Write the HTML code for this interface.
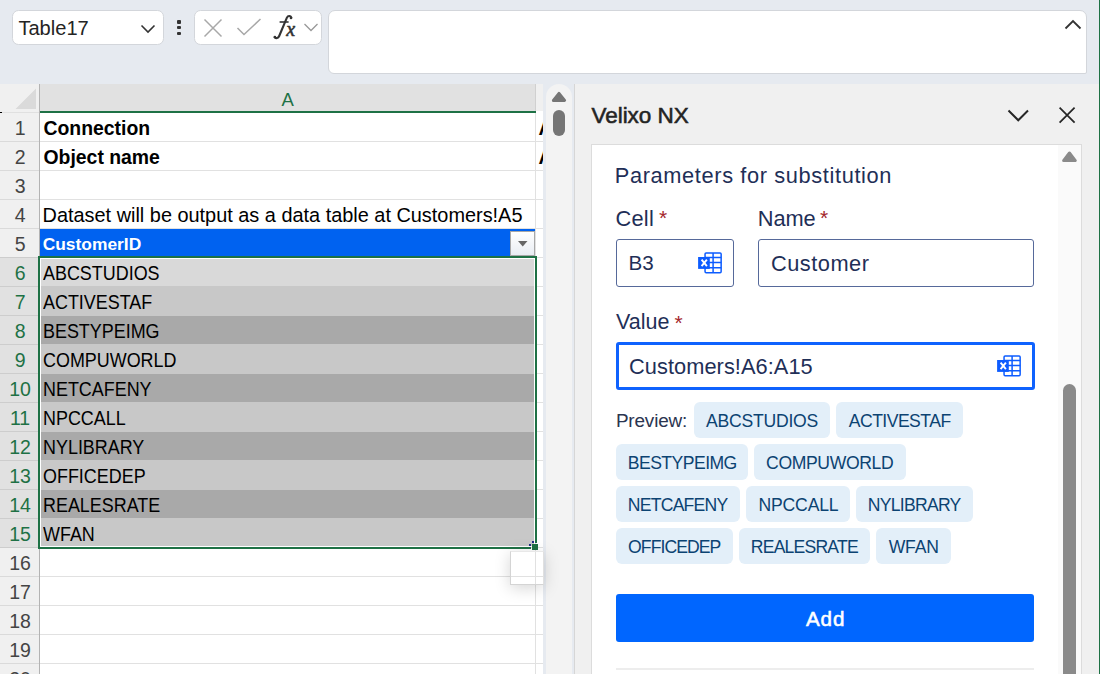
<!DOCTYPE html>
<html><head><meta charset="utf-8">
<style>
*{box-sizing:border-box;margin:0;padding:0}
html,body{width:1100px;height:674px;overflow:hidden;background:#e6eaf0;font-family:"Liberation Sans",sans-serif;position:relative}
.a{position:absolute}
.t{position:absolute;white-space:nowrap;line-height:1}
svg{position:absolute;overflow:visible}
</style></head><body>
<div class="a" style="left:12px;top:10px;width:152px;height:35px;background:#fff;border:1px solid #d3d6db;border-radius:6.5px;"></div>
<div class="t" style="left:18.40px;top:18.19px;font-size:20.1px;color:#242424;">Table17</div>
<svg style="left:138px;top:22px" width="20" height="14"><path d="M3.5 3.5 L10 10 L16.5 3.5" fill="none" stroke="#333" stroke-width="1.6"/></svg>
<div class="a" style="left:177.2px;top:20.1px;width:3.7px;height:3.6px;background:#333;border-radius:1px;"></div>
<div class="a" style="left:177.2px;top:25.9px;width:3.7px;height:3.6px;background:#333;border-radius:1px;"></div>
<div class="a" style="left:177.2px;top:31.6px;width:3.7px;height:3.6px;background:#333;border-radius:1px;"></div>
<div class="a" style="left:194px;top:10px;width:128px;height:35px;background:#fff;border:1px solid #d3d6db;border-radius:6.5px;"></div>
<svg style="left:200px;top:15px" width="26" height="26"><path d="M4.5 4.5 L21.5 21.5 M21.5 4.5 L4.5 21.5" fill="none" stroke="#a8a8a8" stroke-width="1.5"/></svg>
<svg style="left:234px;top:15px" width="30" height="26"><path d="M3.5 13 L10 19.5 L26.5 4" fill="none" stroke="#a8a8a8" stroke-width="1.5"/></svg>
<svg style="left:0;top:0" width="340" height="50"><path d="M291.3 17.6 C290.6 15.6 288 15.4 286.9 17.6 L279.2 36 C278.2 38.4 276 38.6 274.6 37.2" fill="none" stroke="#333" stroke-width="2.1" stroke-linecap="round"/><circle cx="291" cy="17.9" r="1.3" fill="#333"/><circle cx="274.9" cy="37" r="1.3" fill="#333"/><path d="M279.6 22 H288.6" stroke="#333" stroke-width="1.6"/></svg>
<div class="t" style="left:286.20px;top:18.87px;font-size:20px;color:#333;font-style:italic;font-family:'Liberation Serif',serif;-webkit-text-stroke:0.6px #333;">x</div>
<svg style="left:302px;top:20px" width="18" height="14"><path d="M2.5 4 L9 10.5 L15.5 4" fill="none" stroke="#999" stroke-width="1.3"/></svg>
<div class="a" style="left:328px;top:10px;width:759px;height:64px;background:#fff;border:1px solid #d3d6db;border-radius:7px 7px 2px 6px;"></div>
<svg style="left:1062px;top:17px" width="22" height="16"><path d="M3.5 11.5 L11 4 L18.5 11.5" fill="none" stroke="#333" stroke-width="1.8"/></svg>
<div class="a" style="left:0px;top:84px;width:543px;height:590px;background:#fff;"></div>
<div class="a" style="left:0px;top:84px;width:39px;height:28px;background:#f0f0f0;"></div>
<svg style="left:0;top:84px" width="39" height="28"><path d="M36 4.5 L36 25 L15.5 25 Z" fill="#dadada"/></svg>
<div class="a" style="left:40px;top:84px;width:495px;height:27px;background:#e1e1e1;"></div>
<div class="a" style="left:535px;top:84px;width:1px;height:27px;background:#d0d0d0;"></div>
<div class="a" style="left:536px;top:84px;width:7px;height:27px;background:#f0f0f0;"></div>
<div class="a" style="left:0px;top:111px;width:39px;height:1px;background:#f0f0f0;"></div>
<div class="a" style="left:0px;top:112px;width:39px;height:1px;background:#e0e0e0;"></div>
<div class="a" style="left:0px;top:112px;width:1.5px;height:1px;background:#000;"></div>
<div class="a" style="left:40px;top:111px;width:496px;height:2px;background:#1e7145;"></div>
<div class="t" style="left:281.40px;top:91.14px;font-size:18.5px;color:#1e7145;">A</div>
<div class="a" style="left:0px;top:113px;width:39px;height:28px;background:#f0f0f0;"></div>
<div class="a" style="left:0px;top:141px;width:39px;height:1px;background:#dadada;"></div>
<div class="a" style="left:40px;top:141px;width:495px;height:1px;background:#e1e1e1;"></div>
<div class="a" style="left:536px;top:141px;width:7px;height:1px;background:#e1e1e1;"></div>
<div class="t" style="left:0.6px;width:39px;text-align:center;top:119.49px;font-size:19.5px;color:#444">1</div>
<div class="a" style="left:0px;top:142px;width:39px;height:28px;background:#f0f0f0;"></div>
<div class="a" style="left:0px;top:170px;width:39px;height:1px;background:#dadada;"></div>
<div class="a" style="left:40px;top:170px;width:495px;height:1px;background:#e1e1e1;"></div>
<div class="a" style="left:536px;top:170px;width:7px;height:1px;background:#e1e1e1;"></div>
<div class="t" style="left:0.6px;width:39px;text-align:center;top:148.49px;font-size:19.5px;color:#444">2</div>
<div class="a" style="left:0px;top:171px;width:39px;height:28px;background:#f0f0f0;"></div>
<div class="a" style="left:0px;top:199px;width:39px;height:1px;background:#dadada;"></div>
<div class="a" style="left:40px;top:199px;width:495px;height:1px;background:#e1e1e1;"></div>
<div class="a" style="left:536px;top:199px;width:7px;height:1px;background:#e1e1e1;"></div>
<div class="t" style="left:0.6px;width:39px;text-align:center;top:177.49px;font-size:19.5px;color:#444">3</div>
<div class="a" style="left:0px;top:200px;width:39px;height:28px;background:#f0f0f0;"></div>
<div class="a" style="left:0px;top:228px;width:39px;height:1px;background:#dadada;"></div>
<div class="a" style="left:40px;top:228px;width:495px;height:1px;background:#e1e1e1;"></div>
<div class="a" style="left:536px;top:228px;width:7px;height:1px;background:#e1e1e1;"></div>
<div class="t" style="left:0.6px;width:39px;text-align:center;top:206.49px;font-size:19.5px;color:#444">4</div>
<div class="a" style="left:0px;top:229px;width:39px;height:28px;background:#f0f0f0;"></div>
<div class="a" style="left:0px;top:257px;width:39px;height:1px;background:#cdcdcd;"></div>
<div class="a" style="left:40px;top:257px;width:495px;height:1px;background:#e1e1e1;"></div>
<div class="a" style="left:536px;top:257px;width:7px;height:1px;background:#e1e1e1;"></div>
<div class="t" style="left:0.6px;width:39px;text-align:center;top:235.49px;font-size:19.5px;color:#444">5</div>
<div class="a" style="left:0px;top:258px;width:39px;height:28px;background:#e1e1e1;"></div>
<div class="a" style="left:0px;top:286px;width:39px;height:1px;background:#cdcdcd;"></div>
<div class="a" style="left:40px;top:286px;width:495px;height:1px;background:#e1e1e1;"></div>
<div class="a" style="left:536px;top:286px;width:7px;height:1px;background:#e1e1e1;"></div>
<div class="t" style="left:0.6px;width:39px;text-align:center;top:264.49px;font-size:19.5px;color:#1e7145">6</div>
<div class="a" style="left:0px;top:287px;width:39px;height:28px;background:#e1e1e1;"></div>
<div class="a" style="left:0px;top:315px;width:39px;height:1px;background:#cdcdcd;"></div>
<div class="a" style="left:40px;top:315px;width:495px;height:1px;background:#e1e1e1;"></div>
<div class="a" style="left:536px;top:315px;width:7px;height:1px;background:#e1e1e1;"></div>
<div class="t" style="left:0.6px;width:39px;text-align:center;top:293.49px;font-size:19.5px;color:#1e7145">7</div>
<div class="a" style="left:0px;top:316px;width:39px;height:28px;background:#e1e1e1;"></div>
<div class="a" style="left:0px;top:344px;width:39px;height:1px;background:#cdcdcd;"></div>
<div class="a" style="left:40px;top:344px;width:495px;height:1px;background:#e1e1e1;"></div>
<div class="a" style="left:536px;top:344px;width:7px;height:1px;background:#e1e1e1;"></div>
<div class="t" style="left:0.6px;width:39px;text-align:center;top:322.49px;font-size:19.5px;color:#1e7145">8</div>
<div class="a" style="left:0px;top:345px;width:39px;height:28px;background:#e1e1e1;"></div>
<div class="a" style="left:0px;top:373px;width:39px;height:1px;background:#cdcdcd;"></div>
<div class="a" style="left:40px;top:373px;width:495px;height:1px;background:#e1e1e1;"></div>
<div class="a" style="left:536px;top:373px;width:7px;height:1px;background:#e1e1e1;"></div>
<div class="t" style="left:0.6px;width:39px;text-align:center;top:351.49px;font-size:19.5px;color:#1e7145">9</div>
<div class="a" style="left:0px;top:374px;width:39px;height:28px;background:#e1e1e1;"></div>
<div class="a" style="left:0px;top:402px;width:39px;height:1px;background:#cdcdcd;"></div>
<div class="a" style="left:40px;top:402px;width:495px;height:1px;background:#e1e1e1;"></div>
<div class="a" style="left:536px;top:402px;width:7px;height:1px;background:#e1e1e1;"></div>
<div class="t" style="left:0.6px;width:39px;text-align:center;top:380.49px;font-size:19.5px;color:#1e7145">10</div>
<div class="a" style="left:0px;top:403px;width:39px;height:28px;background:#e1e1e1;"></div>
<div class="a" style="left:0px;top:431px;width:39px;height:1px;background:#cdcdcd;"></div>
<div class="a" style="left:40px;top:431px;width:495px;height:1px;background:#e1e1e1;"></div>
<div class="a" style="left:536px;top:431px;width:7px;height:1px;background:#e1e1e1;"></div>
<div class="t" style="left:0.6px;width:39px;text-align:center;top:409.49px;font-size:19.5px;color:#1e7145">11</div>
<div class="a" style="left:0px;top:432px;width:39px;height:28px;background:#e1e1e1;"></div>
<div class="a" style="left:0px;top:460px;width:39px;height:1px;background:#cdcdcd;"></div>
<div class="a" style="left:40px;top:460px;width:495px;height:1px;background:#e1e1e1;"></div>
<div class="a" style="left:536px;top:460px;width:7px;height:1px;background:#e1e1e1;"></div>
<div class="t" style="left:0.6px;width:39px;text-align:center;top:438.49px;font-size:19.5px;color:#1e7145">12</div>
<div class="a" style="left:0px;top:461px;width:39px;height:28px;background:#e1e1e1;"></div>
<div class="a" style="left:0px;top:489px;width:39px;height:1px;background:#cdcdcd;"></div>
<div class="a" style="left:40px;top:489px;width:495px;height:1px;background:#e1e1e1;"></div>
<div class="a" style="left:536px;top:489px;width:7px;height:1px;background:#e1e1e1;"></div>
<div class="t" style="left:0.6px;width:39px;text-align:center;top:467.49px;font-size:19.5px;color:#1e7145">13</div>
<div class="a" style="left:0px;top:490px;width:39px;height:28px;background:#e1e1e1;"></div>
<div class="a" style="left:0px;top:518px;width:39px;height:1px;background:#cdcdcd;"></div>
<div class="a" style="left:40px;top:518px;width:495px;height:1px;background:#e1e1e1;"></div>
<div class="a" style="left:536px;top:518px;width:7px;height:1px;background:#e1e1e1;"></div>
<div class="t" style="left:0.6px;width:39px;text-align:center;top:496.49px;font-size:19.5px;color:#1e7145">14</div>
<div class="a" style="left:0px;top:519px;width:39px;height:28px;background:#e1e1e1;"></div>
<div class="a" style="left:0px;top:547px;width:39px;height:1px;background:#cdcdcd;"></div>
<div class="a" style="left:40px;top:547px;width:495px;height:1px;background:#e1e1e1;"></div>
<div class="a" style="left:536px;top:547px;width:7px;height:1px;background:#e1e1e1;"></div>
<div class="t" style="left:0.6px;width:39px;text-align:center;top:525.49px;font-size:19.5px;color:#1e7145">15</div>
<div class="a" style="left:0px;top:548px;width:39px;height:28px;background:#f0f0f0;"></div>
<div class="a" style="left:0px;top:576px;width:39px;height:1px;background:#dadada;"></div>
<div class="a" style="left:40px;top:576px;width:495px;height:1px;background:#e1e1e1;"></div>
<div class="a" style="left:536px;top:576px;width:7px;height:1px;background:#e1e1e1;"></div>
<div class="t" style="left:0.6px;width:39px;text-align:center;top:554.49px;font-size:19.5px;color:#444">16</div>
<div class="a" style="left:0px;top:577px;width:39px;height:28px;background:#f0f0f0;"></div>
<div class="a" style="left:0px;top:605px;width:39px;height:1px;background:#dadada;"></div>
<div class="a" style="left:40px;top:605px;width:495px;height:1px;background:#e1e1e1;"></div>
<div class="a" style="left:536px;top:605px;width:7px;height:1px;background:#e1e1e1;"></div>
<div class="t" style="left:0.6px;width:39px;text-align:center;top:583.49px;font-size:19.5px;color:#444">17</div>
<div class="a" style="left:0px;top:606px;width:39px;height:28px;background:#f0f0f0;"></div>
<div class="a" style="left:0px;top:634px;width:39px;height:1px;background:#dadada;"></div>
<div class="a" style="left:40px;top:634px;width:495px;height:1px;background:#e1e1e1;"></div>
<div class="a" style="left:536px;top:634px;width:7px;height:1px;background:#e1e1e1;"></div>
<div class="t" style="left:0.6px;width:39px;text-align:center;top:612.49px;font-size:19.5px;color:#444">18</div>
<div class="a" style="left:0px;top:635px;width:39px;height:28px;background:#f0f0f0;"></div>
<div class="a" style="left:0px;top:663px;width:39px;height:1px;background:#dadada;"></div>
<div class="a" style="left:40px;top:663px;width:495px;height:1px;background:#e1e1e1;"></div>
<div class="a" style="left:536px;top:663px;width:7px;height:1px;background:#e1e1e1;"></div>
<div class="t" style="left:0.6px;width:39px;text-align:center;top:641.49px;font-size:19.5px;color:#444">19</div>
<div class="a" style="left:0px;top:664px;width:39px;height:28px;background:#f0f0f0;"></div>
<div class="a" style="left:0px;top:692px;width:39px;height:1px;background:#dadada;"></div>
<div class="a" style="left:40px;top:692px;width:495px;height:1px;background:#e1e1e1;"></div>
<div class="a" style="left:536px;top:692px;width:7px;height:1px;background:#e1e1e1;"></div>
<div class="t" style="left:0.6px;width:39px;text-align:center;top:670.49px;font-size:19.5px;color:#444">20</div>
<div class="a" style="left:39px;top:84px;width:1px;height:590px;background:#b3b3b3;"></div>
<div class="a" style="left:535px;top:113px;width:1px;height:561px;background:#e1e1e1;"></div>
<div class="t" style="left:43.50px;top:118.88px;font-size:19.4px;color:#000;font-weight:bold;">Connection</div>
<div class="t" style="left:43.50px;top:147.88px;font-size:19.4px;color:#000;font-weight:bold;">Object name</div>
<div class="t" style="left:42.60px;top:205.85px;font-size:19.9px;color:#000;">Dataset will be output as a data table at Customers!A5</div>
<div class="a" style="left:40px;top:229px;width:495px;height:27px;background:#0062f0;"></div>
<div class="t" style="left:42.70px;top:236.27px;font-size:17.4px;color:#fff;font-weight:bold;">CustomerID</div>
<div class="a" style="left:510px;top:231px;width:25px;height:25px;background:linear-gradient(#ffffff,#e9edf3);border:1px solid #a8a8a8;"></div>
<svg style="left:510px;top:231px" width="25" height="25"><path d="M8 10 L17.5 10 L12.75 15.5 Z" fill="#666"/></svg>
<div class="a" style="left:40px;top:258px;width:495px;height:288px;background:#c8c8c8;"></div>
<div class="a" style="left:40px;top:259px;width:495px;height:27px;background:#d9d9d9;"></div>
<div class="a" style="left:40px;top:316px;width:495px;height:28px;background:#a9a9a9;"></div>
<div class="a" style="left:40px;top:374px;width:495px;height:28px;background:#a9a9a9;"></div>
<div class="a" style="left:40px;top:432px;width:495px;height:28px;background:#a9a9a9;"></div>
<div class="a" style="left:40px;top:490px;width:495px;height:28px;background:#a9a9a9;"></div>
<div class="t" style="left:43.20px;top:264.21px;font-size:19.6px;color:#000;transform:scaleX(0.915);transform-origin:0 0;">ABCSTUDIOS</div>
<div class="t" style="left:43.20px;top:293.21px;font-size:19.6px;color:#000;transform:scaleX(0.915);transform-origin:0 0;">ACTIVESTAF</div>
<div class="t" style="left:43.20px;top:322.21px;font-size:19.6px;color:#000;transform:scaleX(0.915);transform-origin:0 0;">BESTYPEIMG</div>
<div class="t" style="left:43.20px;top:351.21px;font-size:19.6px;color:#000;transform:scaleX(0.915);transform-origin:0 0;">COMPUWORLD</div>
<div class="t" style="left:43.20px;top:380.21px;font-size:19.6px;color:#000;transform:scaleX(0.915);transform-origin:0 0;">NETCAFENY</div>
<div class="t" style="left:43.20px;top:409.21px;font-size:19.6px;color:#000;transform:scaleX(0.915);transform-origin:0 0;">NPCCALL</div>
<div class="t" style="left:43.20px;top:438.21px;font-size:19.6px;color:#000;transform:scaleX(0.915);transform-origin:0 0;">NYLIBRARY</div>
<div class="t" style="left:43.20px;top:467.21px;font-size:19.6px;color:#000;transform:scaleX(0.915);transform-origin:0 0;">OFFICEDEP</div>
<div class="t" style="left:43.20px;top:496.21px;font-size:19.6px;color:#000;transform:scaleX(0.915);transform-origin:0 0;">REALESRATE</div>
<div class="t" style="left:43.20px;top:525.21px;font-size:19.6px;color:#000;transform:scaleX(0.915);transform-origin:0 0;">WFAN</div>
<div class="a" style="left:40px;top:258px;width:495px;height:1px;background:#fff;"></div>
<div class="a" style="left:534px;top:258px;width:1px;height:289px;background:#fff;"></div>
<div class="a" style="left:40px;top:258px;width:1px;height:289px;background:#fff;"></div>
<div class="a" style="left:40px;top:546px;width:495px;height:1px;background:#fff;"></div>
<div class="a" style="left:38px;top:256px;width:499px;height:2px;background:#1e7145;"></div>
<div class="a" style="left:38px;top:256px;width:2px;height:293px;background:#1e7145;"></div>
<div class="a" style="left:535px;top:256px;width:2px;height:287px;background:#1e7145;"></div>
<div class="a" style="left:38px;top:547px;width:493px;height:2px;background:#1e7145;"></div>
<div class="a" style="left:532px;top:544px;width:6px;height:6px;background:#1e7145;"></div>
<div class="a" style="left:532px;top:541px;width:2px;height:2px;background:#1f2c86;"></div>
<div class="a" style="left:529px;top:544px;width:2px;height:2px;background:#1f2c86;"></div>
<div class="a" style="left:536px;top:113px;width:7px;height:60px;overflow:hidden"><div class="t" style="left:2.50px;top:5.88px;font-size:19.4px;color:#000;font-weight:bold;">A</div>
<div class="t" style="left:2.50px;top:34.88px;font-size:19.4px;color:#000;font-weight:bold;">A</div>
</div>
<div class="a" style="left:543px;top:84px;width:31px;height:590px;background:#e6eaf0;"></div>
<div class="a" style="left:546px;top:84px;width:26px;height:590px;background:#f3f3f3;border-radius:13px 13px 0 0;"></div>
<svg style="left:550px;top:90px" width="18" height="14"><path d="M3.4 10.4 L9 3.4 L14.6 10.4 Z" fill="#757575" stroke="#757575" stroke-width="3" stroke-linejoin="round"/></svg>
<div class="a" style="left:553px;top:110px;width:12px;height:26px;background:#757575;border-radius:6px;"></div>
<div class="a" style="left:509.5px;top:550.5px;width:34px;height:34px;background:transparent;border:1px solid #d4d4d4;border-top-color:#e8e8e8;border-right-color:#e0e0e0;box-shadow:0px 3px 16px rgba(0,0,0,.17);"></div>
<div class="a" style="left:574px;top:84px;width:1px;height:590px;background:#d6d6d6;"></div>
<div class="a" style="left:575px;top:84px;width:524px;height:590px;background:#f0f0f0;"></div>
<div class="a" style="left:1099px;top:0px;width:1px;height:674px;background:#1e7145;"></div>
<div class="t" style="left:591.50px;top:104.95px;font-size:22.5px;color:#242424;letter-spacing:-0.05px;-webkit-text-stroke:0.55px #242424;">Velixo NX</div>
<svg style="left:1005px;top:105px" width="26" height="20"><path d="M3.5 5.5 L13.25 15.25 L23 5.5" fill="none" stroke="#262626" stroke-width="2"/></svg>
<svg style="left:1055px;top:103px" width="24" height="24"><path d="M4.6 4.6 L19.6 19.6 M19.6 4.6 L4.6 19.6" fill="none" stroke="#262626" stroke-width="1.7"/></svg>
<div class="a" style="left:591px;top:144px;width:491px;height:530px;background:#fff;border:1px solid #dcdcdc;border-bottom:none;"></div>
<div class="a" style="left:1058px;top:145px;width:23px;height:529px;background:#fafafa;"></div>
<svg style="left:1060px;top:148px" width="20" height="16"><path d="M3.6 12.6 L9.45 5 L15.3 12.6 Z" fill="#8a8a8a" stroke="#8a8a8a" stroke-width="3" stroke-linejoin="round"/></svg>
<div class="a" style="left:1063px;top:384px;width:13px;height:290px;background:#8a8a8a;border-radius:6.5px 6.5px 0 0;"></div>
<div class="t" style="left:614.80px;top:164.85px;font-size:21.8px;color:#1f2f57;letter-spacing:0.62px;">Parameters for substitution</div>
<div class="t" style="left:615.40px;top:208.05px;font-size:21.8px;color:#1f2f57;letter-spacing:0.3px;">Cell</div>
<div class="t" style="left:659.00px;top:206.72px;font-size:21px;color:#a4262c;">*</div>
<div class="t" style="left:757.80px;top:208.05px;font-size:21.8px;color:#1f2f57;letter-spacing:-0.13px;">Name</div>
<div class="t" style="left:820.00px;top:206.72px;font-size:21px;color:#a4262c;">*</div>
<div class="a" style="left:616px;top:239px;width:118px;height:48px;background:#fff;border:1px solid #56699a;border-radius:3px;"></div>
<div class="t" style="left:628.40px;top:253.16px;font-size:20.6px;color:#1f2f57;letter-spacing:0.2px;">B3</div>
<div class="a" style="left:758px;top:239px;width:276px;height:48px;background:#fff;border:1px solid #56699a;border-radius:3px;"></div>
<div class="t" style="left:771.00px;top:252.75px;font-size:21.8px;color:#1f2f57;letter-spacing:0.49px;">Customer</div>
<div class="t" style="left:616.00px;top:312.10px;font-size:21.5px;color:#1f2f57;">Value</div>
<div class="t" style="left:674.50px;top:311.52px;font-size:21px;color:#a4262c;">*</div>
<div class="a" style="left:616px;top:342px;width:419px;height:48px;background:#fff;border:3px solid #0f62fe;border-radius:3px;"></div>
<div class="t" style="left:629.00px;top:355.55px;font-size:21.8px;color:#1f2f57;letter-spacing:0.05px;">Customers!A6:A15</div>
<svg style="left:697.6px;top:252px" width="24" height="22" viewBox="0 0 24 22"><rect x="7.05" y="0.95" width="16.1" height="19.7" rx="1.1" fill="#fff" stroke="#0d5cff" stroke-width="1.5"/><path d="M7 5.55 H23.2 M7 10.55 H23.2 M7 15.8 H23.2 M15.1 1 V20.6" stroke="#0d5cff" stroke-width="1.5"/><rect x="0.1" y="5" width="11.7" height="11.9" fill="#0d5cff"/><path d="M3.6 7.6 L8.9 14.2 M8.9 7.6 L3.6 14.2" stroke="#fff" stroke-width="1.9"/></svg>
<svg style="left:997px;top:355px" width="24" height="22" viewBox="0 0 24 22"><rect x="7.05" y="0.95" width="16.1" height="19.7" rx="1.1" fill="#fff" stroke="#0d5cff" stroke-width="1.5"/><path d="M7 5.55 H23.2 M7 10.55 H23.2 M7 15.8 H23.2 M15.1 1 V20.6" stroke="#0d5cff" stroke-width="1.5"/><rect x="0.1" y="5" width="11.7" height="11.9" fill="#0d5cff"/><path d="M3.6 7.6 L8.9 14.2 M8.9 7.6 L3.6 14.2" stroke="#fff" stroke-width="1.9"/></svg>
<div class="t" style="left:615.90px;top:411.80px;font-size:18.9px;color:#2b3550;letter-spacing:-0.15px;">Preview:</div>
<div class="a" style="left:694px;top:402px;width:136px;height:35.5px;background:#e3eff9;border-radius:6px;"></div>
<div class="t" style="left:706.00px;top:412.60px;font-size:17.6px;letter-spacing:-0.230px;color:#0c4372">ABCSTUDIOS</div>
<div class="a" style="left:836px;top:402px;width:127px;height:35.5px;background:#e3eff9;border-radius:6px;"></div>
<div class="t" style="left:848.80px;top:412.60px;font-size:17.6px;letter-spacing:-0.540px;color:#0c4372">ACTIVESTAF</div>
<div class="a" style="left:616px;top:444px;width:132px;height:35.5px;background:#e3eff9;border-radius:6px;"></div>
<div class="t" style="left:627.80px;top:454.60px;font-size:17.6px;letter-spacing:-0.544px;color:#0c4372">BESTYPEIMG</div>
<div class="a" style="left:754px;top:444px;width:152px;height:35.5px;background:#e3eff9;border-radius:6px;"></div>
<div class="t" style="left:766.10px;top:454.60px;font-size:17.6px;letter-spacing:-0.380px;color:#0c4372">COMPUWORLD</div>
<div class="a" style="left:616px;top:486px;width:124px;height:35.5px;background:#e3eff9;border-radius:6px;"></div>
<div class="t" style="left:627.80px;top:496.60px;font-size:17.6px;letter-spacing:-0.763px;color:#0c4372">NETCAFENY</div>
<div class="a" style="left:746px;top:486px;width:104px;height:35.5px;background:#e3eff9;border-radius:6px;"></div>
<div class="t" style="left:758.50px;top:496.60px;font-size:17.6px;letter-spacing:-0.180px;color:#0c4372">NPCCALL</div>
<div class="a" style="left:856px;top:486px;width:117px;height:35.5px;background:#e3eff9;border-radius:6px;"></div>
<div class="t" style="left:867.80px;top:496.60px;font-size:17.6px;letter-spacing:-0.738px;color:#0c4372">NYLIBRARY</div>
<div class="a" style="left:616px;top:528px;width:117px;height:35.5px;background:#e3eff9;border-radius:6px;"></div>
<div class="t" style="left:628.10px;top:538.60px;font-size:17.6px;letter-spacing:-0.940px;color:#0c4372">OFFICEDEP</div>
<div class="a" style="left:739px;top:528px;width:131px;height:35.5px;background:#e3eff9;border-radius:6px;"></div>
<div class="t" style="left:750.80px;top:538.60px;font-size:17.6px;letter-spacing:-0.800px;color:#0c4372">REALESRATE</div>
<div class="a" style="left:876px;top:528px;width:75px;height:35.5px;background:#e3eff9;border-radius:6px;"></div>
<div class="t" style="left:888.70px;top:538.60px;font-size:17.6px;letter-spacing:-0.200px;color:#0c4372">WFAN</div>
<div class="a" style="left:616px;top:594px;width:418px;height:48px;background:#0066ff;border-radius:3px;"></div>
<div class="t" style="left:806.00px;top:609.46px;font-size:20.6px;color:#fff;letter-spacing:0.85px;-webkit-text-stroke:0.55px #fff;">Add</div>
<div class="a" style="left:616px;top:668px;width:418px;height:2px;background:#ededed;"></div>
</body></html>
